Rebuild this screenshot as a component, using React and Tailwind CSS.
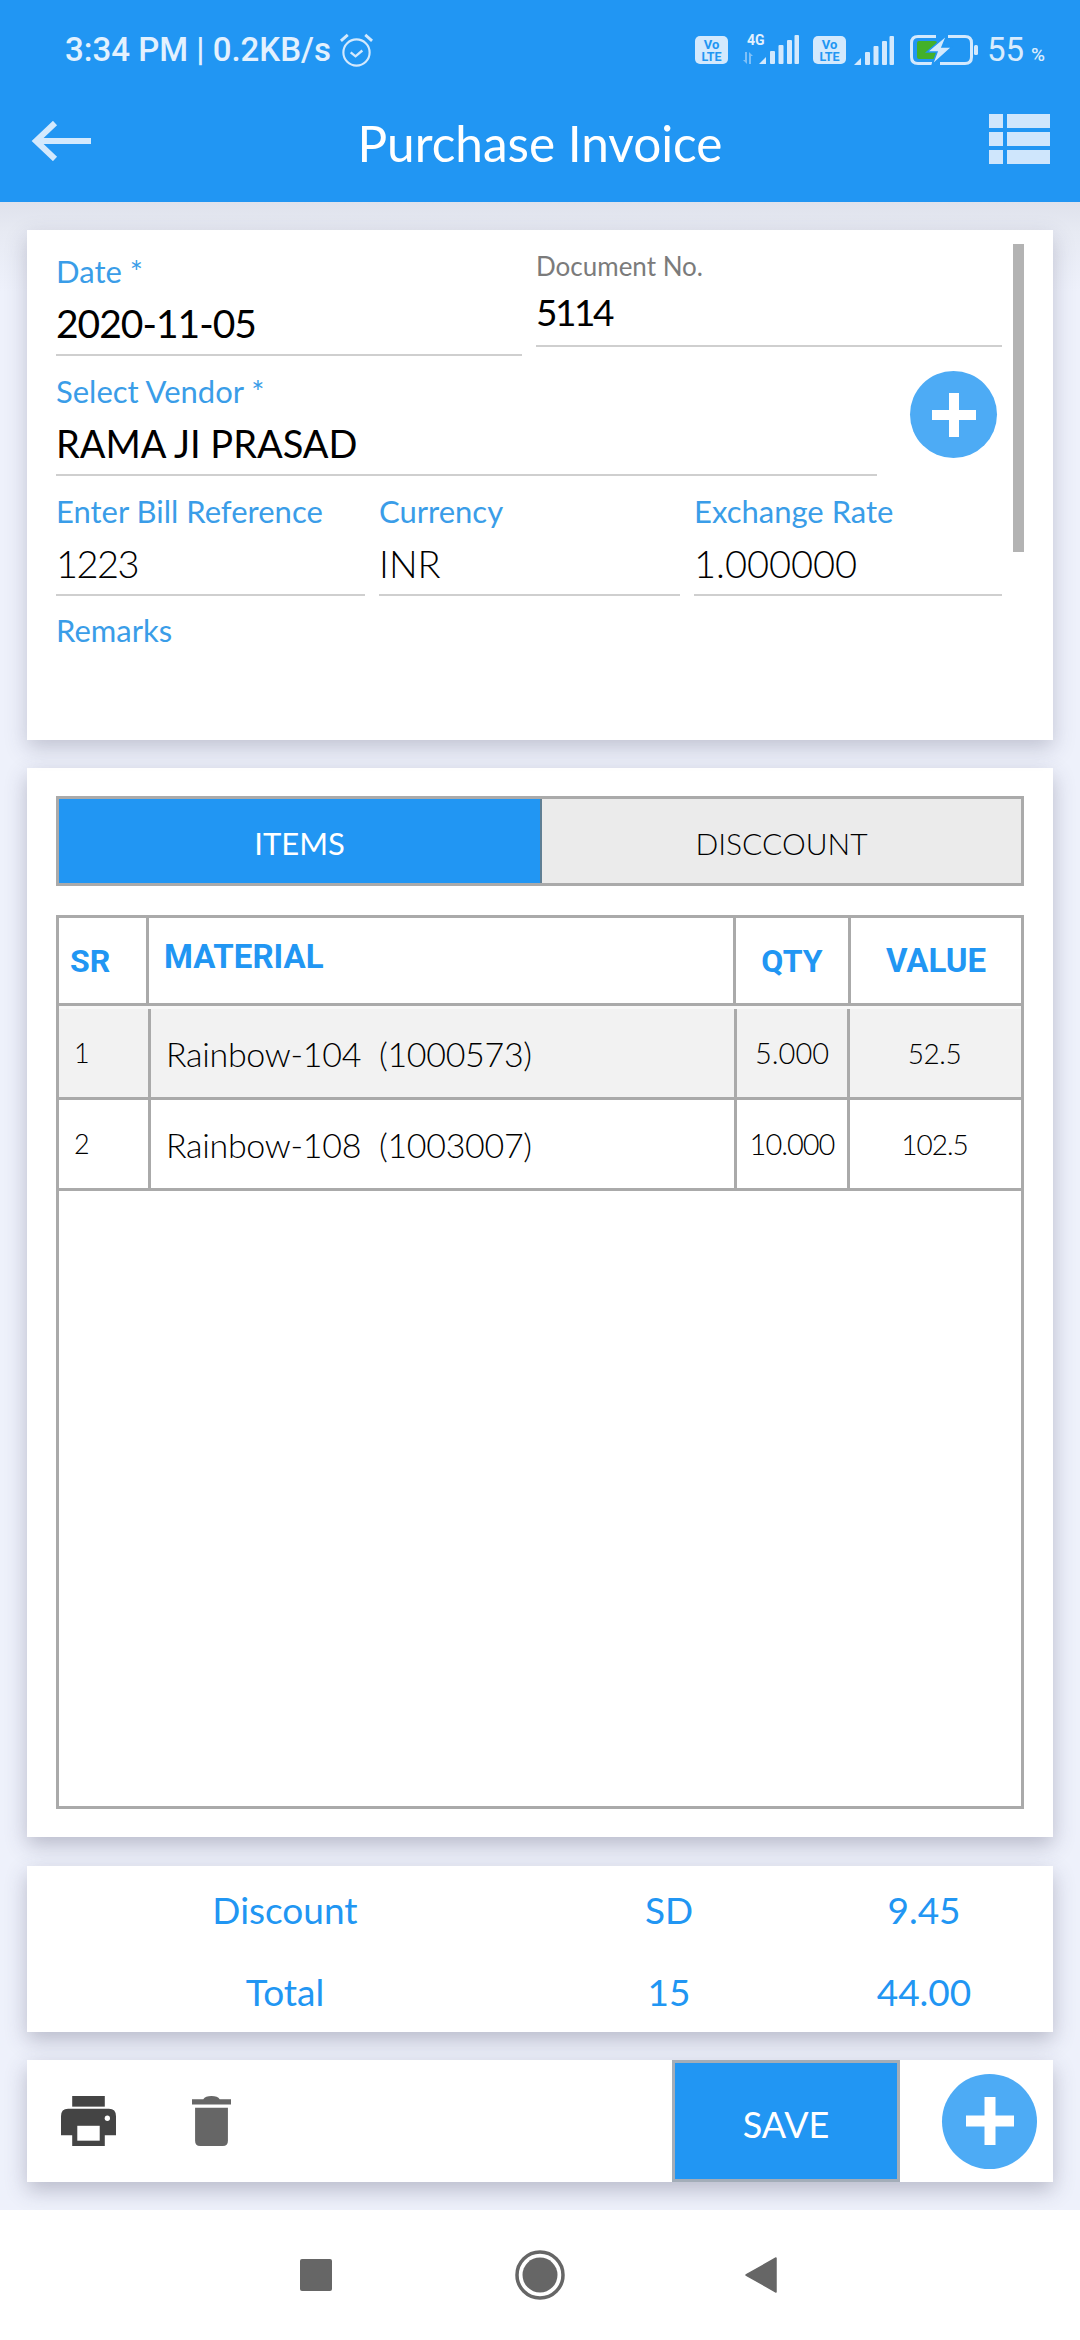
import React from "react";

const body = "font-['Lato','Noto_Sans',sans-serif]";
const roboto = "font-['Roboto',sans-serif]";

function VoLte() {
  return (
    <svg width="33" height="28" viewBox="0 0 33 28" className="shrink-0">
      <rect width="33" height="28" rx="5" fill="#d3e9fd" />
      <text x="16.5" y="12.5" textAnchor="middle" fontSize="13" fontWeight="700" fontFamily="Roboto" fill="#2196f3">Vo</text>
      <text x="16.5" y="25" textAnchor="middle" fontSize="12.5" fontWeight="700" fontFamily="Roboto" fill="#2196f3">LTE</text>
    </svg>
  );
}

function Bars() {
  return (
    <svg width="40" height="29" viewBox="0 0 40 29" className="shrink-0" fill="#d3e9fd">
      <path d="M0 29 L7 22 V29 Z" />
      <rect x="11" y="16" width="5" height="13" rx="1" />
      <rect x="19.5" y="10" width="5" height="19" rx="1" />
      <rect x="28" y="5" width="5" height="24" rx="1" />
      <rect x="35.5" y="0" width="4.5" height="29" rx="1" />
    </svg>
  );
}

function Circle({ size, plus, thick }) {
  return (
    <div
      className="flex items-center justify-center rounded-full bg-[#4dabf5] shrink-0"
      style={{ width: size, height: size }}
    >
      <svg width={plus} height={plus} viewBox={`0 0 ${plus} ${plus}`} fill="#ffffff">
        <rect x={(plus - thick) / 2} y="0" width={thick} height={plus} />
        <rect x="0" y={(plus - thick) / 2} width={plus} height={thick} />
      </svg>
    </div>
  );
}

function Field({ label, value, className = "", labelClass = "text-[#3a9de8] text-[31px]", valueClass = "text-[38px] text-black", gap = "mt-[7px]", pb = "pb-[6px]" }) {
  return (
    <div className={className}>
      <div className={`h-[40px] leading-[40px] whitespace-nowrap ${labelClass}`}>{label}</div>
      <div className={`h-[50px] leading-[50px] ${gap} ${pb} box-content border-b-2 border-[#cfcfcf] whitespace-nowrap ${valueClass}`}>{value}</div>
    </div>
  );
}

function Cell({ w, children, className = "", last }) {
  return (
    <div
      className={`flex items-center shrink-0 h-full ${last ? "" : "border-r-[3px] border-[#aaaaaa]"} ${className}`}
      style={{ width: w }}
    >
      {children}
    </div>
  );
}

export default function App() {
  const thin = "text-[38px] text-black font-light";
  return (
    <div className={`w-[1080px] h-[2340px] flex flex-col bg-[#eef1fb] overflow-hidden ${body}`}>
      {/* App bar */}
      <header className="h-[202px] bg-[#2196f3] shrink-0 flex flex-col relative z-10">
        <div className="h-[100px] flex items-center pl-[65px] pr-[35px]">
          <span className={`${roboto} text-[33px] font-medium text-[#e3f1fe] whitespace-nowrap`}>3:34 PM | 0.2KB/s</span>
          <svg width="35" height="35" viewBox="0 0 34 36" className="ml-[8px] shrink-0" fill="none" stroke="#d3e9fd" strokeWidth="2.2">
            <circle cx="17" cy="20" r="13.5" />
            <path d="M11 20 L16 24 L23 18" strokeWidth="2.4" />
            <path d="M1 8 L8 2 M33 8 L26 2" strokeWidth="3" />
          </svg>
          <div className="ml-auto flex items-center">
            <VoLte />
            <div className="relative w-[57px] h-[30px] ml-[14px]">
              <span className={`absolute left-[5px] -top-[5px] ${roboto} text-[14px] font-bold text-[#e3f1fe]`}>4G</span>
              <svg width="12" height="12" viewBox="0 0 10 12" className="absolute left-0 bottom-[1px]" fill="#7fc0f8">
                <path d="M0 8 L2 8 V0 H4 V12 Z M6 0 L10 4 H8 V12 H6 Z" />
              </svg>
              <div className="absolute right-0 bottom-[1px] flex"><Bars /></div>
            </div>
            <div className="ml-[14px]"><VoLte /></div>
            <div className="ml-[8px]"><Bars /></div>
            <svg width="68" height="30" viewBox="0 0 68 30" className="ml-[16px] shrink-0">
              <rect x="7" y="6" width="20" height="18" rx="2" fill="#43b02a" />
              <path d="M26 1.5 H8 Q1.5 1.5 1.5 8 V22 Q1.5 28.5 8 28.5 H22 M38 1.5 H55 Q61.5 1.5 61.5 8 V22 Q61.5 28.5 55 28.5 H30" fill="none" stroke="#d3e9fd" strokeWidth="3" />
              <path d="M37 0 L17 17 H27 L22 30 L42 12 H32 Z" fill="#d3e9fd" stroke="#2196f3" strokeWidth="1.5" />
              <rect x="64" y="10" width="4" height="10" rx="1.5" fill="#d3e9fd" />
            </svg>
            <span className={`${roboto} ml-[9px] text-[33px] text-[#d9ecfd] whitespace-nowrap`}>55<span className="text-[19px] font-medium ml-[7px]">%</span></span>
          </div>
        </div>
        <div className="flex-1 relative">
          <svg width="60" height="40" viewBox="0 0 60 40" className="absolute left-[31px] top-[21px]" fill="none" stroke="#d3e9fd" strokeWidth="6">
            <path d="M60 20 H5 M24 2 L5 20 L24 38" />
          </svg>
          <h1 className="w-full text-center text-white text-[49.5px] leading-[60px] pt-[13px] font-normal">Purchase Invoice</h1>
          <svg width="61" height="50" viewBox="0 0 61 50" className="absolute left-[989px] top-[14px]" fill="#cfe6fc">
            <rect width="14" height="14" /><rect x="18" width="43" height="14" />
            <rect y="18" width="14" height="14" /><rect x="18" y="18" width="43" height="14" />
            <rect y="36" width="14" height="14" /><rect x="18" y="36" width="43" height="14" />
          </svg>
        </div>
      </header>

      <main className="flex-1 flex flex-col px-[27px] pt-[28px] bg-[linear-gradient(#dfe2ec,#e7eaf3_30px,#eef1fb_90px)]">
        {/* Form card */}
        <section className="h-[510px] bg-white shadow-[0_8px_20px_rgba(60,60,90,0.25)] relative pl-[29px] shrink-0">
          <div className="absolute left-[986px] top-[14px] w-[11px] h-[308px] bg-[#b3b3b3]" />
          <div className="flex gap-[14px] items-start">
            <Field className="w-[466px] pt-[21px]" label="Date *" value="2020-11-05" valueClass="text-[39px] text-black tracking-[-1px]" />
            <Field
              className="w-[466px] pt-[16px]"
              label="Document No."
              labelClass="text-[#7b7b7b] text-[26px]"
              value="5114"
              valueClass="text-[37px] text-black tracking-[-2.5px]"
              gap="mt-[1px]"
              pb="pb-[8px]"
            />
          </div>
          <div className="flex items-start mt-[15px]">
            <Field className="w-[821px]" label="Select Vendor *" value="RAMA JI PRASAD" />
            <div className="ml-[33px]"><Circle size={87} plus={44} thick={10} /></div>
          </div>
          <div className="flex gap-[14px] mt-[15px]">
            <Field className="w-[309px]" label="Enter Bill Reference" value="1223" valueClass="text-[38px] text-black font-light tracking-[-1.5px]" pb="pb-[6px]" />
            <Field className="w-[301px]" label="Currency" value="INR" valueClass={thin} pb="pb-[6px]" />
            <Field className="w-[308px]" label="Exchange Rate" value="1.000000" valueClass={thin} pb="pb-[6px]" />
          </div>
          <div className="mt-[14px] h-[40px] leading-[40px] text-[31px] text-[#3a9de8]">Remarks</div>
        </section>

        {/* Items card */}
        <section className="h-[1069px] mt-[28px] bg-white shadow-[0_8px_20px_rgba(60,60,90,0.3)] px-[29px] pt-[28px] shrink-0 flex flex-col">
          <div className="h-[90px] flex border-[3px] border-[#aaaaaa] shrink-0">
            <div className="w-[483px] bg-[#2196f3] border-r-[2px] border-[#5f7f94] flex items-center justify-center text-white text-[31px] pt-[5px]">ITEMS</div>
            <div className="flex-1 bg-[#ebebeb] flex items-center justify-center text-black text-[30px] font-light pt-[5px]">DISCCOUNT</div>
          </div>
          <div className="h-[894px] mt-[29px] border-[3px] border-[#aaaaaa] flex flex-col shrink-0">
            <div className={`h-[88px] flex border-b-[3px] border-[#aaaaaa] shrink-0 ${roboto} font-bold text-[#2196f3] text-[32px]`}>
              <Cell w={90} className="pl-[11px]">SR</Cell>
              <Cell w={587} className="pl-[15px] pb-[7px] text-[33px]">MATERIAL</Cell>
              <Cell w={115} className="justify-center">QTY</Cell>
              <Cell w={170} last className="justify-center text-[33px]">VALUE</Cell>
            </div>
            <div className="h-[94px] flex border-t-[3px] border-t-[#f8f8f8] border-b-[3px] border-b-[#aaaaaa] shrink-0 bg-[#f2f2f2] text-black font-light">
              <Cell w={92} className="pl-[15px] text-[27px]">1</Cell>
              <Cell w={586} className="pl-[15px] text-[34px] tracking-[-0.3px] whitespace-pre">Rainbow-104  (1000573)</Cell>
              <Cell w={113} className="justify-center text-[29px]">5.000</Cell>
              <Cell w={171} last className="justify-center pr-[2px] text-[28px] tracking-[-0.5px]">52.5</Cell>
            </div>
            <div className="h-[91px] flex border-b-[3px] border-[#aaaaaa] shrink-0 text-black font-light">
              <Cell w={92} className="pl-[15px] text-[27px]">2</Cell>
              <Cell w={586} className="pl-[15px] text-[34px] tracking-[-0.3px] whitespace-pre">Rainbow-108  (1003007)</Cell>
              <Cell w={113} className="justify-center text-[29px] tracking-[-1px]">10.000</Cell>
              <Cell w={171} last className="justify-center pr-[2px] text-[28px] tracking-[-1px]">102.5</Cell>
            </div>
          </div>
        </section>

        {/* Totals */}
        <section className="h-[166px] mt-[29px] pt-[3px] bg-white shadow-[0_8px_20px_rgba(60,60,90,0.3)] shrink-0 grid grid-cols-[516px_252px_258px] grid-rows-[82px_82px] items-center text-[37px] text-[#2196f3] text-center">
          <div>Discount</div>
          <div>SD</div>
          <div>9.45</div>
          <div>Total</div>
          <div>15</div>
          <div>44.00</div>
        </section>

        {/* Actions */}
        <section className="h-[122px] mt-[28px] bg-white shadow-[0_8px_20px_rgba(60,60,90,0.3)] shrink-0 flex items-center">
          <svg width="55" height="50" viewBox="0 0 54 47" preserveAspectRatio="none" className="ml-[34px] shrink-0">
            <rect x="11" width="32" height="10" fill="#444444" />
            <path d="M7 12 H47 Q54 12 54 19 V37 H43 V47 H11 V37 H0 V19 Q0 12 7 12 Z" fill="#444444" />
            <rect x="16" y="28" width="22" height="14" fill="#ffffff" />
            <circle cx="45.5" cy="21" r="2.6" fill="#ffffff" />
          </svg>
          <svg width="39" height="50" viewBox="0 0 38 47" preserveAspectRatio="none" className="ml-[76px] shrink-0" fill="#666666">
            <path d="M0 3 H11 Q13 0 19 0 Q25 0 27 3 H38 V8 H0 Z" />
            <path d="M3 11 H35 V42 Q35 47 30 47 H8 Q3 47 3 42 Z" />
          </svg>
          <button className="ml-[441px] w-[228px] h-full shrink-0 bg-[#2196f3] border-[3px] border-[#a3adb8] text-white text-[36px] pt-[6px]">SAVE</button>
          <div className="ml-[42px]"><Circle size={95} plus={48} thick={11} /></div>
        </section>
      </main>

      {/* Nav bar */}
      <nav className="h-[130px] bg-white shrink-0 flex items-center relative z-10">
        <div className="ml-[300px] w-[32px] h-[32px] rounded-[2px] bg-[#666666]" />
        <svg width="50" height="50" viewBox="0 0 50 50" className="ml-[183px]">
          <circle cx="25" cy="25" r="23" fill="none" stroke="#666666" strokeWidth="3.5" />
          <circle cx="25" cy="25" r="17.5" fill="#666666" />
        </svg>
        <svg width="32" height="36" viewBox="0 0 32 36" className="ml-[180px]" fill="#666666">
          <path d="M31 1 V35 L1 18 Z" stroke="#666666" strokeLinejoin="round" strokeWidth="1.5" />
        </svg>
      </nav>
    </div>
  );
}
